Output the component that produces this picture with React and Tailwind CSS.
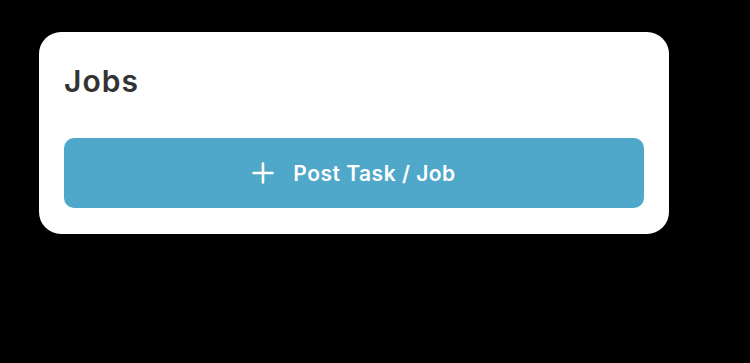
export default function App() {
  return (
    <div className="w-[750px] h-[363px] bg-black pt-[32px] pl-[39px]" style={{ fontFamily: "Inter, 'Noto Sans', sans-serif" }}>
      <div className="w-[630px] h-[202px] bg-white rounded-[22px] px-[25px] pt-[31px] flex flex-col">
        <h1 className="text-[30px] leading-[36px] font-semibold text-[#333333] tracking-[1px]">Jobs</h1>
        <button className="mt-[39px] h-[70px] w-full rounded-[10px] bg-[#4fa8c9] flex items-center justify-center gap-[19px] text-white">
          <svg width="22" height="22" viewBox="0 0 22 22" fill="none" stroke="white" strokeWidth="2.6" strokeLinecap="round">
            <path d="M11 1.5v19M1.5 11h19" />
          </svg>
          <span className="text-[21px] font-semibold leading-none tracking-[0.5px]">Post Task / Job</span>
        </button>
      </div>
    </div>
  );
}
